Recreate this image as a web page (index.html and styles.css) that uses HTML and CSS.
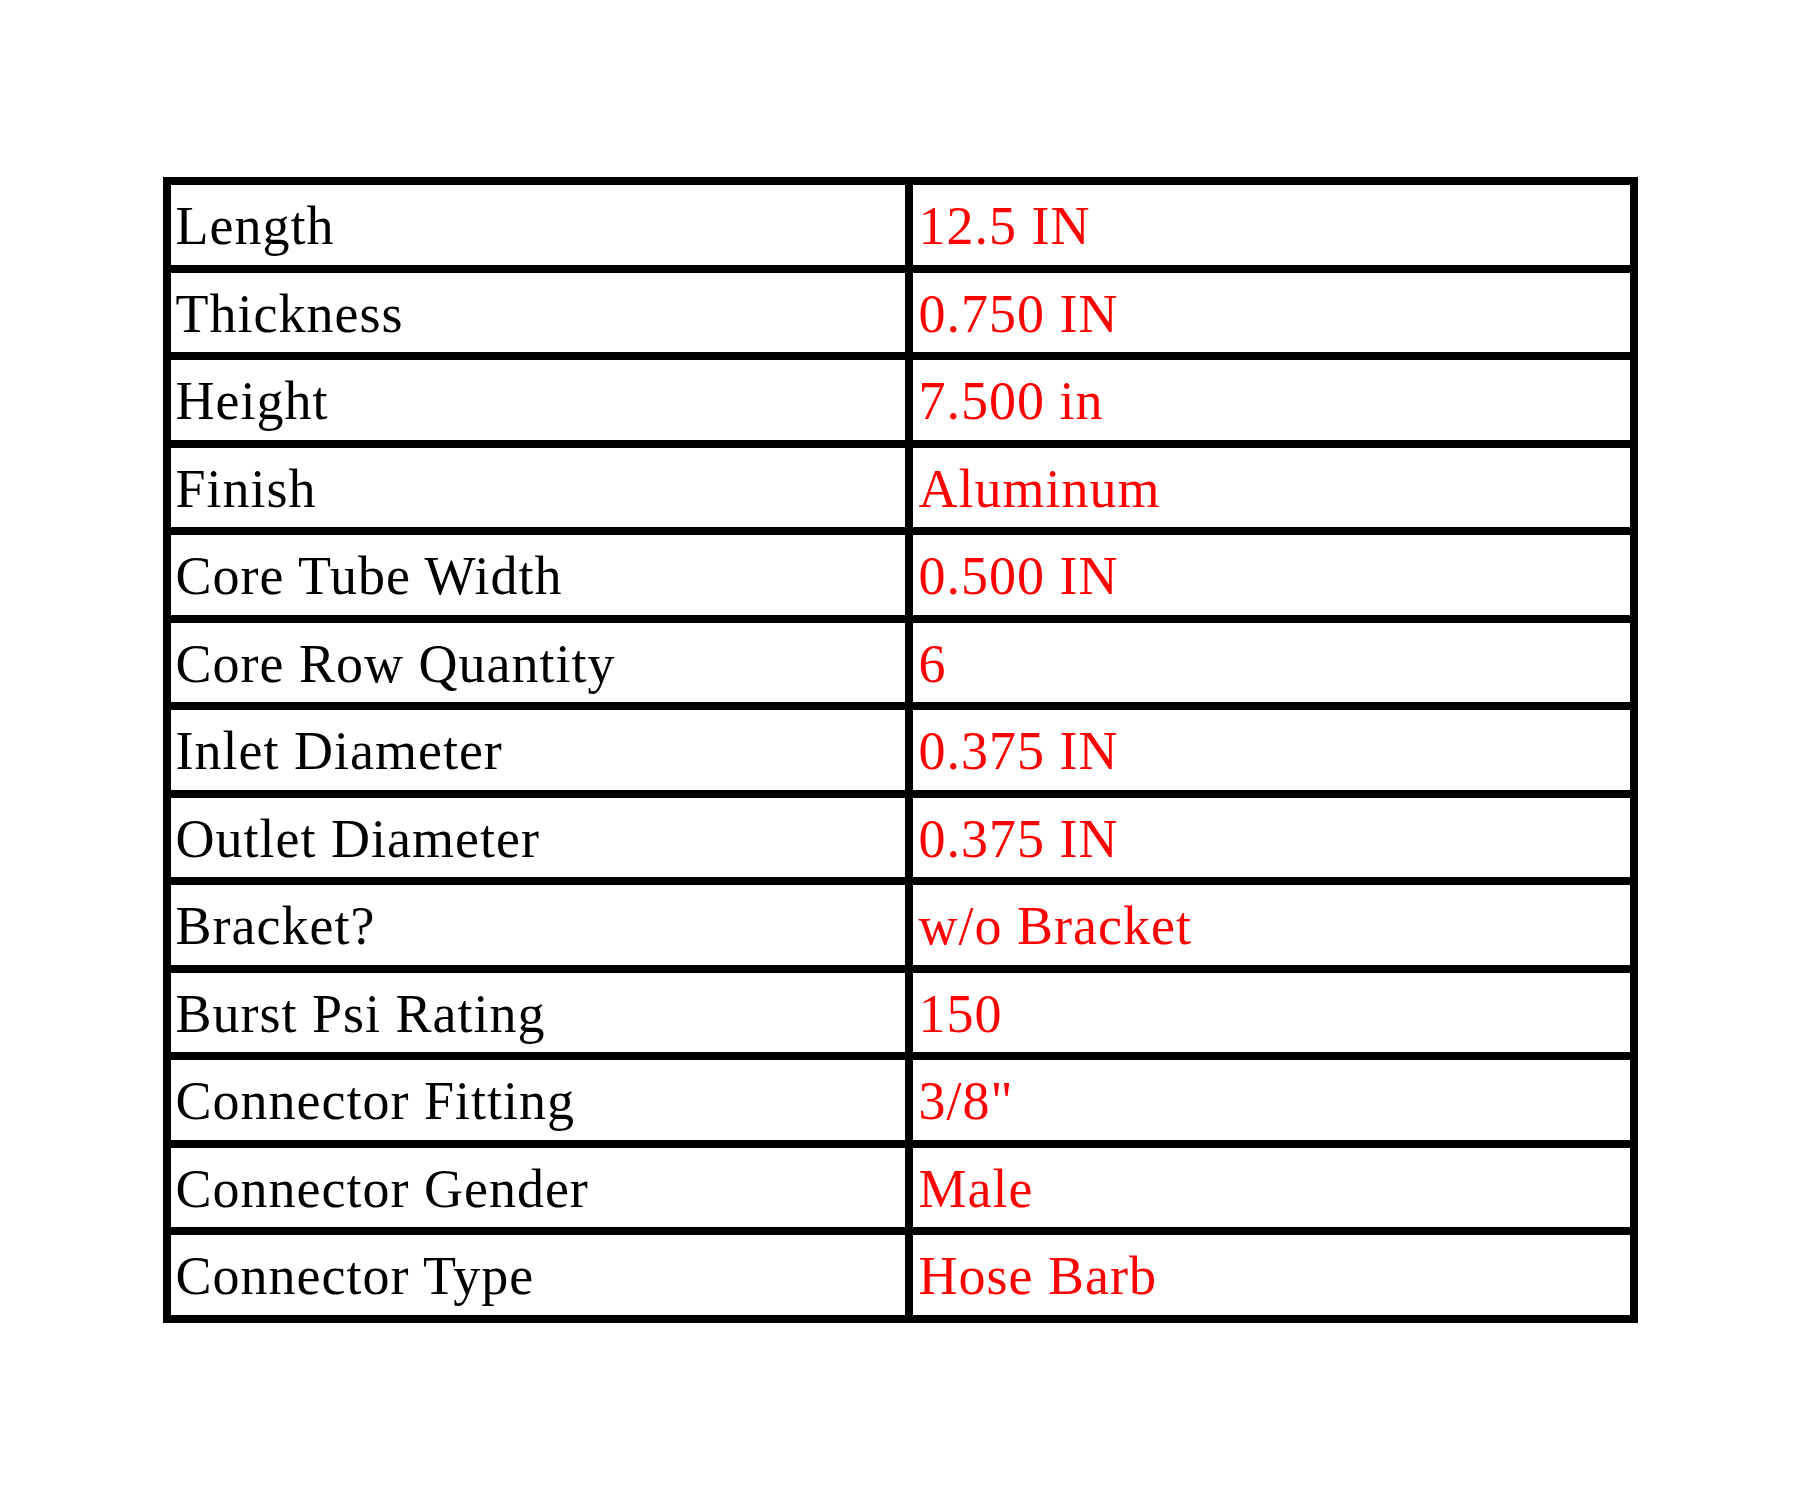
FILE: index.html
```html
<!DOCTYPE html>
<html>
<head>
<meta charset="utf-8">
<link rel="stylesheet" href="styles.css">
</head>
<body>
<div class="spec">
  <div class="k">Length</div><div class="v">12.5 IN</div>
  <div class="k">Thickness</div><div class="v">0.750 IN</div>
  <div class="k">Height</div><div class="v">7.500 in</div>
  <div class="k">Finish</div><div class="v">Aluminum</div>
  <div class="k">Core Tube Width</div><div class="v">0.500 IN</div>
  <div class="k">Core Row Quantity</div><div class="v">6</div>
  <div class="k">Inlet Diameter</div><div class="v">0.375 IN</div>
  <div class="k">Outlet Diameter</div><div class="v">0.375 IN</div>
  <div class="k">Bracket?</div><div class="v">w/o Bracket</div>
  <div class="k">Burst Psi Rating</div><div class="v">150</div>
  <div class="k">Connector Fitting</div><div class="v">3/8"</div>
  <div class="k">Connector Gender</div><div class="v">Male</div>
  <div class="k">Connector Type</div><div class="v">Hose Barb</div>
</div>
</body>
</html>
```

FILE: styles.css
```css
html, body {
  margin: 0;
  padding: 0;
  background: #ffffff;
}
.spec {
  width: 1475px;
  box-sizing: border-box;
  margin: 177px auto 0;
  background: #000000;
  padding: 8px;
  display: grid;
  grid-template-columns: 734px 717px;
  grid-template-rows: repeat(13, 79.5px);
  gap: 8px;
}
.k, .v {
  background: #ffffff;
  font-family: "Liberation Serif", serif;
  font-size: 54px;
  letter-spacing: 1px;
  line-height: 76.5px;
  padding-top: 3px;
  padding-left: 5px;
  white-space: nowrap;
}
.k { color: #000000; }
.v { color: #ff0000; padding-left: 6px; }
```
